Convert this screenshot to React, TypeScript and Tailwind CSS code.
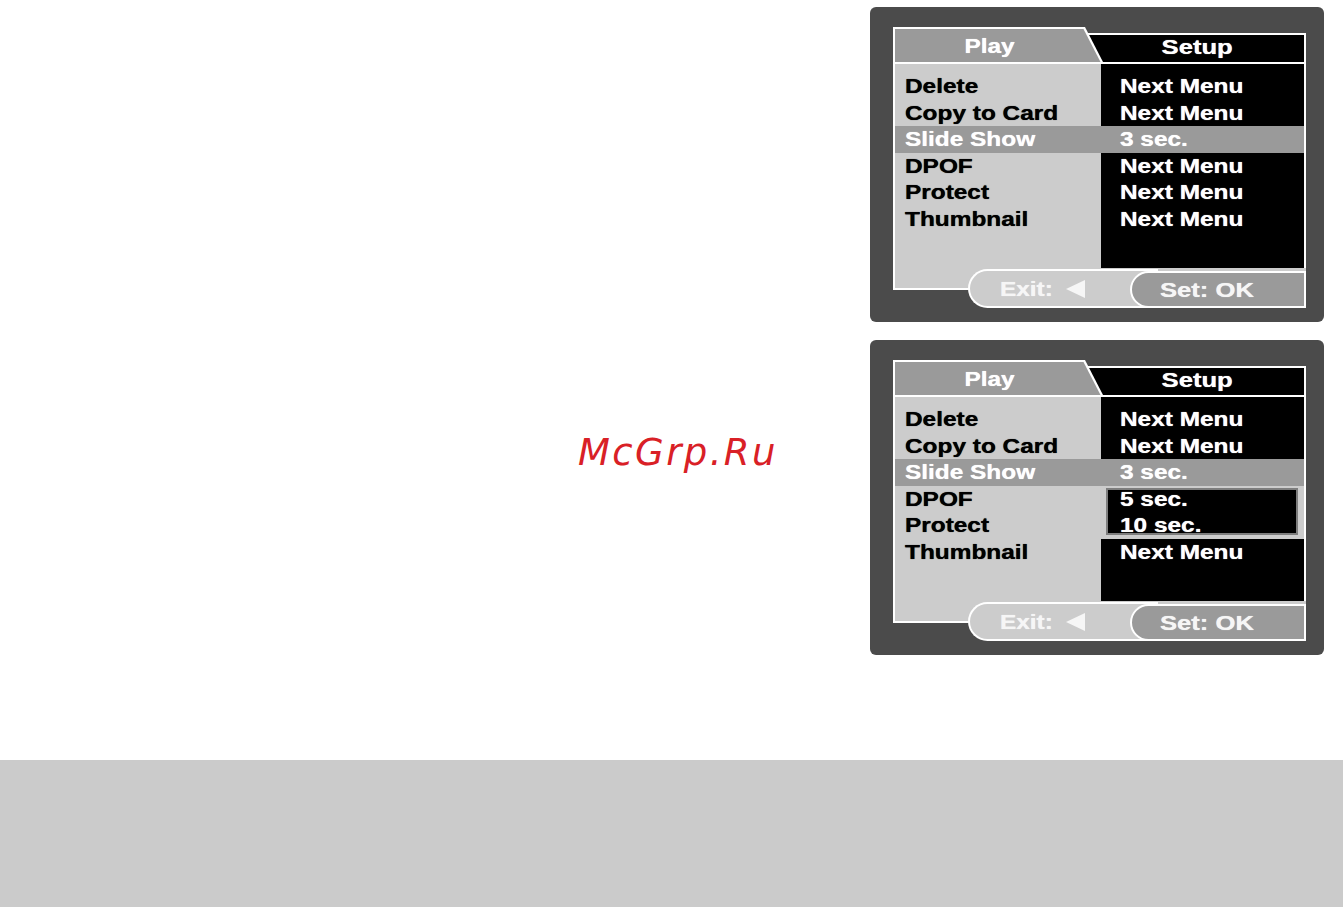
import type { ReactNode } from "react";

interface MenuRow {
	label: string;
	value: string;
}

const menu: MenuRow[] = [
	{ label: "Delete", value: "Next Menu" },
	{ label: "Copy to Card", value: "Next Menu" },
	{ label: "Slide Show", value: "3 sec." },
	{ label: "DPOF", value: "Next Menu" },
	{ label: "Protect", value: "Next Menu" },
	{ label: "Thumbnail", value: "Next Menu" },
];

// camera OSD lettering is a stretched, heavy grotesque
const Wide = ({ children, center }: { children: ReactNode; center?: boolean }) => (
	<span
		className={`inline-block scale-x-[1.22] [text-shadow:0_0_0.7px_currentColor] ${center ? "origin-center" : "origin-left"}`}
	>
		{children}
	</span>
);

const Row = ({ selected, className, children }: { selected?: boolean; className: string; children: ReactNode }) => (
	<div
		className={`h-[26.5px] leading-[26.5px] ${className} ${selected ? "bg-[#9a9a9a] text-white" : ""}`}
	>
		<Wide>{children}</Wide>
	</div>
);

const Panel = ({ dropdown = false }: { dropdown?: boolean }) => (
	<div className="h-[315px] w-[454px] rounded-[6px] bg-[#4b4b4b] pl-[23px] pt-[20px] font-['Liberation_Sans',Arial,Helvetica,sans-serif] text-[20px] font-bold">
		<div className="relative w-[413px]">
			{/* tab strip */}
			<div className="flex h-[35px] items-end">
				<div className="relative z-10 h-[35px] w-[212px] shrink-0 bg-white [clip-path:polygon(0_0,192px_0,210px_35px,0_35px)]">
					<div className="absolute left-[2px] top-[2px] flex h-[33px] w-[206px] items-center justify-center bg-[#9a9a9a] pr-[16px] text-white [clip-path:polygon(0_0,188.5px_0,205.5px_33px,0_33px)]">
						<Wide center>Play</Wide>
					</div>
				</div>
				<div className="-ml-[22px] flex h-[29px] flex-1 items-center justify-center border-r-2 border-t-2 border-white bg-black pb-[3px] pl-[8px] text-[21px] text-white">
					<Wide center>Setup</Wide>
				</div>
			</div>
			<div className="h-[2px] bg-white" />

			{/* menu body */}
			<div className="flex h-[204px]">
				<div className="w-[208px] border-l-2 border-white bg-[#cccccc] pt-[9px] text-black">
					{menu.map((r, i) => (
						<Row key={r.label} selected={i === 2} className="pl-[10px]">
							{r.label}
						</Row>
					))}
				</div>
				<div className="flex-1 border-r-2 border-white bg-black pt-[9px] text-white">
					{dropdown ? (
						<>
							{menu.slice(0, 3).map((r, i) => (
								<Row key={r.label} selected={i === 2} className="pl-[19px]">
									{r.value}
								</Row>
							))}
							<div className="h-[53px] bg-[#cccccc] pb-[4px] pl-[5px] pr-[6px] pt-[2px]">
								<div className="h-full border-2 border-[#7d7d7d] bg-black pl-[12px]">
									<div className="-mt-[4px] h-[26.5px] leading-[26.5px]">
										<Wide>5 sec.</Wide>
									</div>
									<div className="h-[26.5px] leading-[26.5px]">
										<Wide>10 sec.</Wide>
									</div>
								</div>
							</div>
							<Row className="pl-[19px]">{menu[5].value}</Row>
						</>
					) : (
						menu.map((r, i) => (
							<Row key={r.label} selected={i === 2} className="pl-[19px]">
								{r.value}
							</Row>
						))
					)}
				</div>
			</div>
			<div className="h-[22px] border-b-2 border-l-2 border-white bg-[#cccccc]" />

			{/* soft-key hints */}
			<div className="absolute left-[75px] top-[242px] flex h-[39px] w-[190px] items-center rounded-l-[20px] border-2 border-r-0 border-white bg-[#cccccc] pl-[30px] text-[#f6f6f6]">
				<Wide>Exit:</Wide>
				<svg width="19" height="18" viewBox="0 0 19 18" className="ml-[23px]">
					<polygon points="19,0 0,9 19,18" fill="#f6f6f6" />
				</svg>
			</div>
			<div className="absolute right-0 top-[244px] flex h-[37px] w-[176px] items-center rounded-l-[19px] border-2 border-white bg-[#9a9a9a] pl-[28px] text-[21px] text-[#f6f6f6]">
				<Wide>Set: OK</Wide>
			</div>
		</div>
	</div>
);

export default function App() {
	return (
		<div className="flex min-h-[907px] flex-col bg-white">
			<div className="flex h-[760px]">
				<div className="w-[870px] shrink-0 pl-[578px] pt-[434px]">
					<p className="font-['DejaVu_Sans',sans-serif] text-[37px] italic leading-none tracking-[2.4px] text-[#d92026]">
						McGrp.Ru
					</p>
				</div>
				<div className="flex flex-col gap-[18px] pt-[7px]">
					<Panel />
					<Panel dropdown />
				</div>
			</div>
			<div className="h-[147px] bg-[#cbcbcb]" />
		</div>
	);
}
